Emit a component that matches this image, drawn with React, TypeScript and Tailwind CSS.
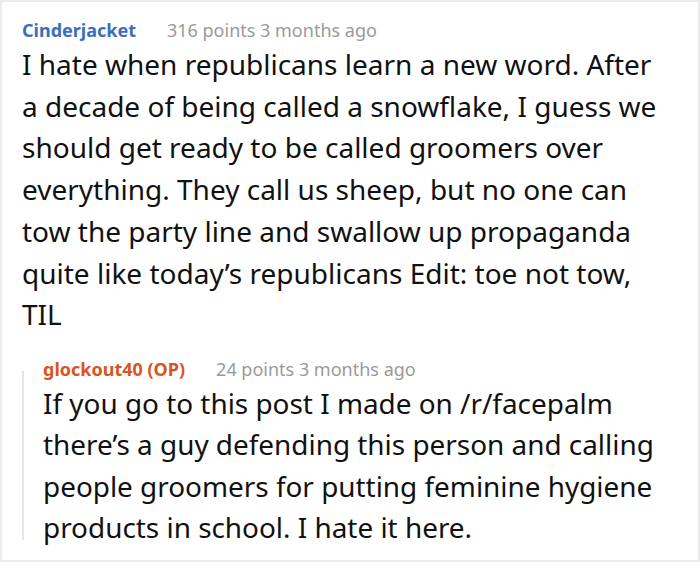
import React from 'react';

const font = { fontFamily: '"Noto Sans", "Open Sans", sans-serif' };

const Meta = ({ name, nameClass, points }: { name: string; nameClass: string; points: string }) => (
  <div className="flex items-baseline gap-[31px] text-[18px] leading-[24px]">
    <span className={`font-bold ${nameClass}`}>{name}</span>
    <span className="text-[#9a9a9a]">{points} points 3 months ago</span>
  </div>
);

export default function App() {
  return (
    <div
      className="w-[700px] h-[562px] overflow-hidden bg-white border-2 border-[#ececec] pl-[20px] pr-[36px] pt-[16px] text-[#111]"
      style={font}
    >
      <Meta name="Cinderjacket" nameClass="text-[#3a6ec0]" points="316" />
      <p className="mt-[2px] text-[28px] leading-[41.7px]">
        I hate when republicans learn a new word. After a decade of being called a snowflake, I guess we
        should get ready to be called groomers over everything. They call us sheep, but no one can tow the
        party line and swallow up propaganda quite like today’s republicans Edit: toe not tow, TIL
      </p>

      <div className="mt-[21px] flex">
        <div className="w-[2px] bg-[#e6e6e6] mt-[14px] mb-[8px]" />
        <div className="pl-[19px]">
          <Meta name="glockout40 (OP)" nameClass="text-[#d9551f]" points="24" />
          <p className="mt-[2px] text-[27.9px] leading-[41.3px] whitespace-nowrap">
            If you go to this post I made on /r/facepalm
            <br />
            there’s a guy defending this person and calling
            <br />
            people groomers for putting feminine hygiene
            <br />
            products in school. I hate it here.
          </p>
        </div>
      </div>
    </div>
  );
}
